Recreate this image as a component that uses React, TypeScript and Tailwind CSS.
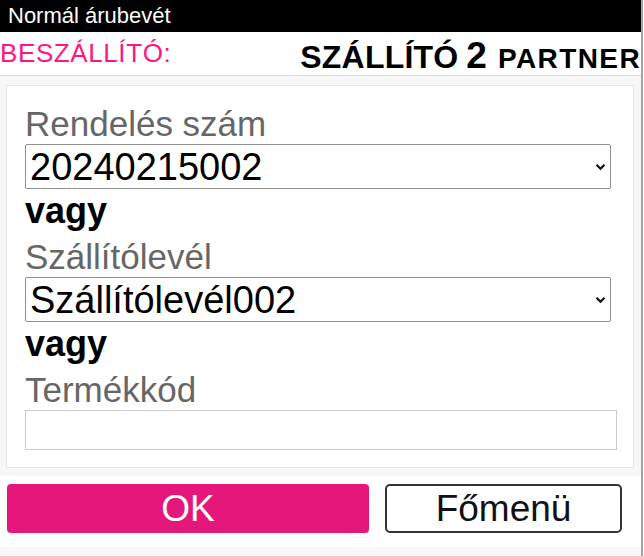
import React from "react";

function Chevron() {
  return (
    <svg width="11" height="8" viewBox="0 0 11 8" className="absolute right-[4px] top-1/2 -translate-y-1/2">
      <path d="M1.5 1.8 L5.5 5.8 L9.5 1.8" fill="none" stroke="#111" strokeWidth="2.2" />
    </svg>
  );
}

function SelectBox({ value, width }: { value: string; width: string }) {
  return (
    <div className={`relative h-[45px] ${width} border border-[#8f8f8f] rounded-[2px] bg-white flex items-center pl-[4px]`}>
      <span className="text-[38px] leading-none text-black">{value}</span>
      <Chevron />
    </div>
  );
}

export default function App() {
  return (
    <div className="w-[644px] h-[556px] flex bg-white" style={{ fontFamily: '"Liberation Sans", Arial, sans-serif' }}>
      <div className="w-[641px] h-full flex flex-col">
        <div className="h-[32px] bg-black flex items-center pl-[8px]">
          <span className="text-white text-[22px] leading-none">Normál árubevét</span>
        </div>
        <div className="h-[44px] flex items-center justify-between border-b border-[#dcdcdc]">
          <span className="text-[#ff1584] text-[26px] leading-none tracking-[0.6px] mt-[-2px]">BESZÁLLÍTÓ:</span>
          <span className="font-bold text-black leading-none flex items-baseline mt-[4px]">
            <span className="text-[32px] tracking-[0.2px]">SZÁLLÍTÓ</span>
            <span className="text-[37px] ml-[8px]">2</span>
            <span className="text-[28px] tracking-[1.4px] ml-[11px]">PARTNER</span>
          </span>
        </div>
        <div className="bg-[#f7f7f7] pt-[9px] pb-[8px] pl-[6px] pr-[7px]">
          <div className="bg-white border border-[#e6e6e6] pt-[14px] pb-[17px] pl-[18px] pr-[15px] text-[35px] leading-[44px]">
            <div className="text-[#666666] pt-[4px] leading-[40px]">Rendelés szám</div>
            <SelectBox value="20240215002" width="w-[586px]" />
            <div className="font-bold text-black text-[36px]">vagy</div>
            <div className="text-[#666666] pt-[4px] leading-[40px]">Szállítólevél</div>
            <SelectBox value="Szállítólevél002" width="w-[586px]" />
            <div className="font-bold text-black text-[36px]">vagy</div>
            <div className="text-[#666666] pt-[4px] leading-[40px]">Termékkód</div>
            <div className="h-[40px] w-[592px] border border-[#cccccc] bg-white" />
          </div>
        </div>
        <div className="flex-1 bg-white flex items-start pt-[8px] pl-[7px] gap-[16px]">
          <button className="w-[362px] h-[49px] bg-[#e5177b] rounded-[4px] text-white text-[37px] leading-none flex items-center justify-center">
            OK
          </button>
          <button className="w-[237px] h-[49px] bg-white border-2 border-[#333333] rounded-[5px] text-[#111] text-[37px] leading-none flex items-center justify-center">
            Főmenü
          </button>
        </div>
        <div className="h-[9px] bg-[#f7f7f7]" />
      </div>
      <div className="w-[2px] h-full bg-[#a3a3a3]" />
      <div className="w-[1px] h-full bg-white" />
    </div>
  );
}
